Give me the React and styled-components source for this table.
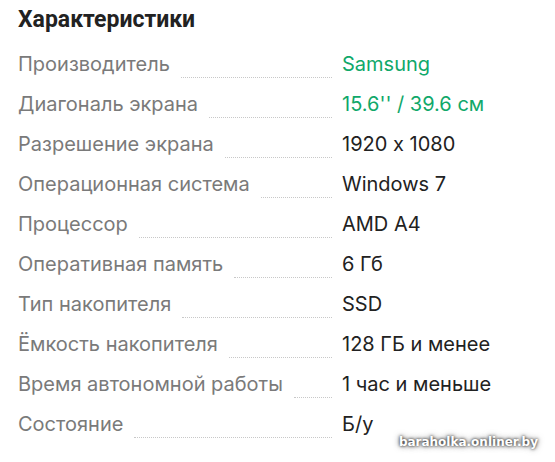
import React from "react";
import styled, { createGlobalStyle } from "styled-components";

const specs = [
  { label: "Производитель", value: "Samsung", link: true },
  { label: "Диагональ экрана", value: "15.6'' / 39.6 см", link: true },
  { label: "Разрешение экрана", value: "1920 x 1080" },
  { label: "Операционная система", value: "Windows 7" },
  { label: "Процессор", value: "AMD A4" },
  { label: "Оперативная память", value: "6 Гб" },
  { label: "Тип накопителя", value: "SSD" },
  { label: "Ёмкость накопителя", value: "128 ГБ и менее" },
  { label: "Время автономной работы", value: "1 час и меньше" },
  { label: "Состояние", value: "Б/у" },
];

export default function App() {
  return (
    <Wrapper>
      <GlobalStyle />
      <Title>Характеристики</Title>
      <List>
        {specs.map((row) => (
          <Row key={row.label}>
            <LabelCell>
              <Label>{row.label}</Label>
              <Dots />
            </LabelCell>
            <Value $link={row.link}>{row.value}</Value>
          </Row>
        ))}
      </List>
      <Watermark>baraholka.onliner.by</Watermark>
    </Wrapper>
  );
}

const GlobalStyle = createGlobalStyle`
  body {
    margin: 0;
    background: #fff;
    font-family: Inter, Roboto, "Liberation Sans", sans-serif;
    font-feature-settings: "calt" 0;
  }
`;

const Wrapper = styled.section`
  position: relative;
  width: 555px;
  height: 462px;
  padding: 6px 0 0 18px;
  box-sizing: border-box;
  overflow: hidden;
`;

const Title = styled.h2`
  margin: 0;
  font-family: Roboto, sans-serif;
  font-size: 23px;
  line-height: 28px;
  font-weight: 700;
  color: #222;
`;

const List = styled.div`
  margin-top: 10px;
  display: flex;
  flex-direction: column;
`;

const Row = styled.div`
  display: flex;
  align-items: center;
  height: 40px;
`;

const LabelCell = styled.div`
  display: flex;
  align-items: center;
  width: 324px;
  flex-shrink: 0;
  height: 100%;
`;

const Label = styled.span`
  font-size: 20px;
  color: #7a7a7a;
  white-space: nowrap;
`;

const Dots = styled.span`
  flex: 1;
  align-self: flex-end;
  margin: 0 10px 6px 11px;
  border-bottom: 1px dotted #c8c8c8;
`;

const Value = styled.span`
  font-size: 20px;
  color: ${(p) => (p.$link ? "#10a86a" : "#222")};
  white-space: nowrap;
`;

const Watermark = styled.div`
  position: absolute;
  right: 17px;
  bottom: 13px;
  font-family: "DejaVu Sans", sans-serif;
  font-size: 12px;
  font-weight: 700;
  color: #fff;
  text-shadow: 0 0 3px rgba(0, 0, 0, 0.9), 0 0 6px rgba(0, 0, 0, 0.6);
`;
